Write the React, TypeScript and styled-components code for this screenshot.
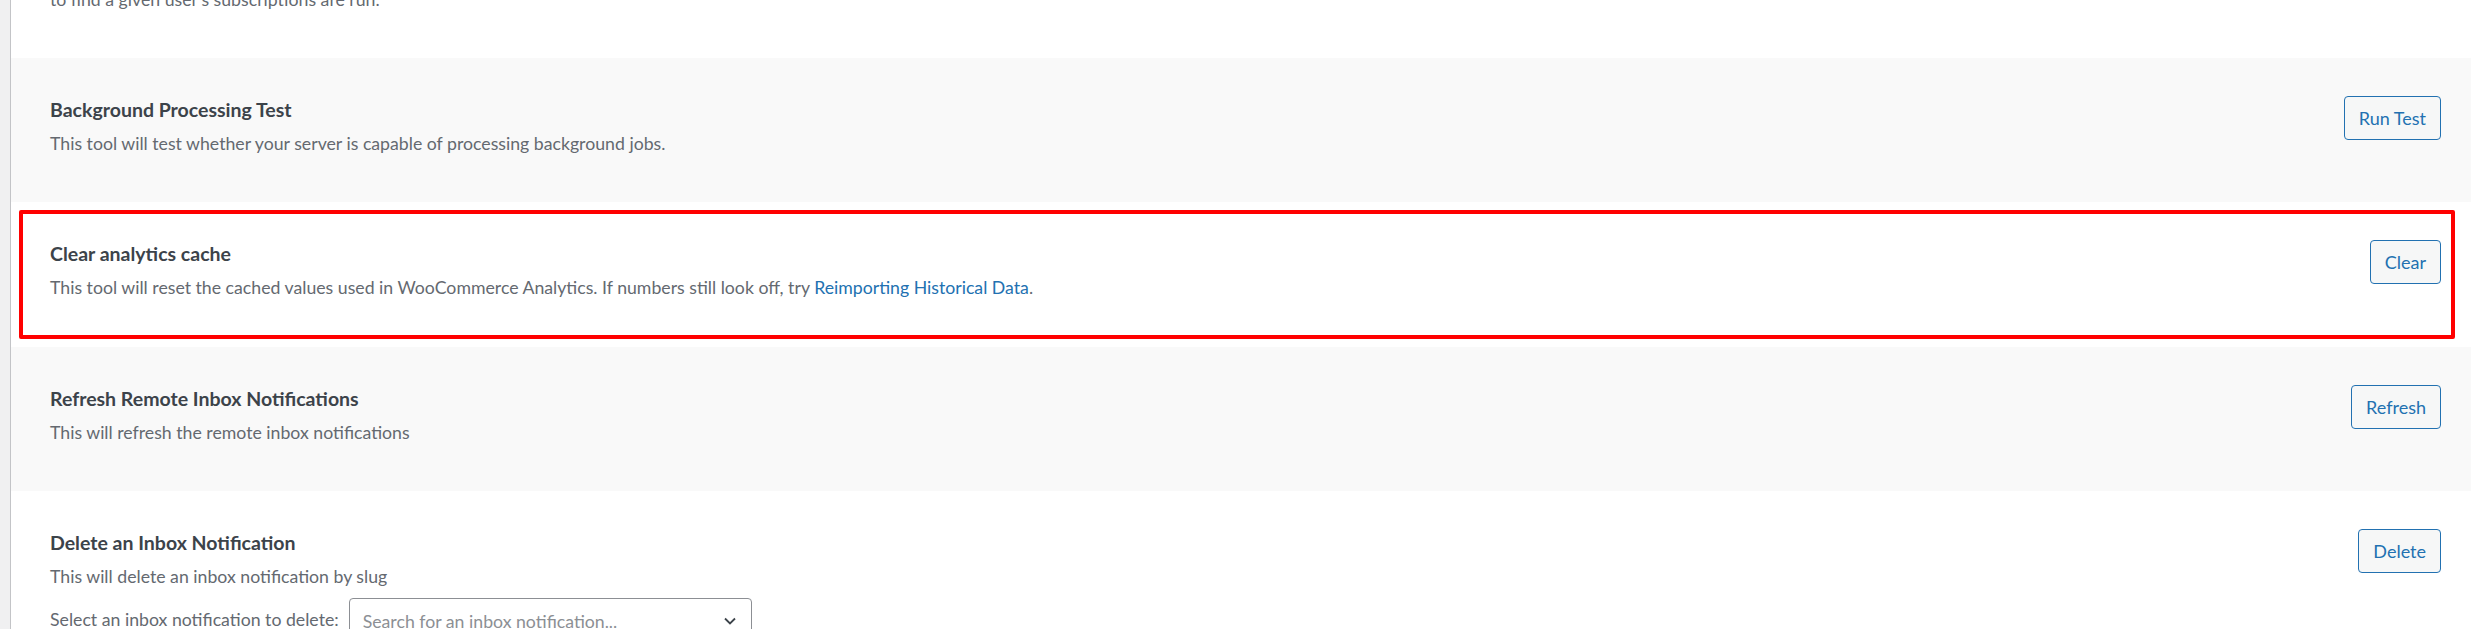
import styled, { createGlobalStyle } from "styled-components";

const GlobalStyle = createGlobalStyle`
  html, body {
    margin: 0;
    padding: 0;
    background: #fff;
  }
  body {
    font-family: Lato, "Liberation Sans", sans-serif;
  }
`;

const Page = styled.div`
  display: flex;
  height: 629px;
  overflow: hidden;
`;

const Sidebar = styled.div`
  flex: none;
  width: 10px;
  background: #f0f0f1;
  border-right: 1px solid #c3c4c7;
`;

const Table = styled.div`
  flex: 1;
  display: flex;
  flex-direction: column;
`;

const Row = styled.div<{ $striped?: boolean; $height?: number }>`
  position: relative;
  box-sizing: border-box;
  display: flex;
  justify-content: space-between;
  align-items: flex-start;
  flex: ${(p) => (p.$height ? "none" : "1")};
  height: ${(p) => (p.$height ? `${p.$height}px` : "auto")};
  padding: 38px 30px 0 39px;
  background: ${(p) => (p.$striped ? "#f9f9f9" : "#fff")};
`;

const ClippedRow = styled(Row)`
  padding-top: 0;
  overflow: hidden;
`;

const Info = styled.div`
  display: flex;
  flex-direction: column;
`;

const Name = styled.strong`
  font-size: 19.5px;
  font-weight: 700;
  line-height: 28px;
  color: #3c434a;
`;

const Description = styled.p<{ $offset?: number }>`
  margin: ${(p) => (p.$offset !== undefined ? `${p.$offset}px` : "6px")} 0 0;
  font-size: 17.7px;
  line-height: 27px;
  color: #646970;
`;

const Link = styled.a`
  color: #2271b1;
  text-decoration: none;
`;

const Button = styled.button`
  flex: none;
  box-sizing: border-box;
  height: 44px;
  padding: 0 14px;
  border: 1px solid #2271b1;
  border-radius: 4px;
  background: #f6f7f7;
  color: #2271b1;
  font-family: inherit;
  font-size: 18px;
  cursor: pointer;
`;

const Highlight = styled.span`
  position: absolute;
  top: 8px;
  left: 8px;
  right: 16px;
  bottom: 8px;
  border: 4px solid #ff0000;
  border-radius: 2px;
  pointer-events: none;
`;

const SelectLine = styled.div`
  display: flex;
  align-items: center;
  gap: 10px;
  margin-top: 8px;
  font-size: 17.7px;
  color: #646970;
`;

const SelectBox = styled.div`
  box-sizing: border-box;
  display: flex;
  align-items: center;
  justify-content: space-between;
  width: 403px;
  height: 42px;
  padding: 4px 14px 0 13px;
  border: 1px solid #8c8f94;
  border-radius: 4px;
  background: #fff;
  color: #8c8f94;
  font-size: 17.7px;
`;

const Chevron = () => (
  <svg width="14" height="10" viewBox="0 0 14 10" fill="none">
    <path d="M2 2.5 7 7.5 12 2.5" stroke="#3c434a" strokeWidth="1.8" />
  </svg>
);

export default function App() {
  return (
    <>
      <GlobalStyle />
      <Page>
        <Sidebar />
        <Table>
          <ClippedRow $height={58}>
            <Description $offset={-14}>
              to find a given user's subscriptions are run.
            </Description>
          </ClippedRow>

          <Row $striped $height={144}>
            <Info>
              <Name>Background Processing Test</Name>
              <Description>
                This tool will test whether your server is capable of processing background jobs.
              </Description>
            </Info>
            <Button>Run Test</Button>
          </Row>

          <Row $height={145}>
            <Info>
              <Name>Clear analytics cache</Name>
              <Description>
                This tool will reset the cached values used in WooCommerce Analytics. If numbers
                still look off, try <Link href="#">Reimporting Historical Data</Link>.
              </Description>
            </Info>
            <Button>Clear</Button>
            <Highlight />
          </Row>

          <Row $striped $height={144}>
            <Info>
              <Name>Refresh Remote Inbox Notifications</Name>
              <Description>This will refresh the remote inbox notifications</Description>
            </Info>
            <Button>Refresh</Button>
          </Row>

          <Row>
            <Info>
              <Name>Delete an Inbox Notification</Name>
              <Description>This will delete an inbox notification by slug</Description>
              <SelectLine>
                <span>Select an inbox notification to delete:</span>
                <SelectBox>
                  <span>Search for an inbox notification...</span>
                  <Chevron />
                </SelectBox>
              </SelectLine>
            </Info>
            <Button>Delete</Button>
          </Row>
        </Table>
      </Page>
    </>
  );
}
